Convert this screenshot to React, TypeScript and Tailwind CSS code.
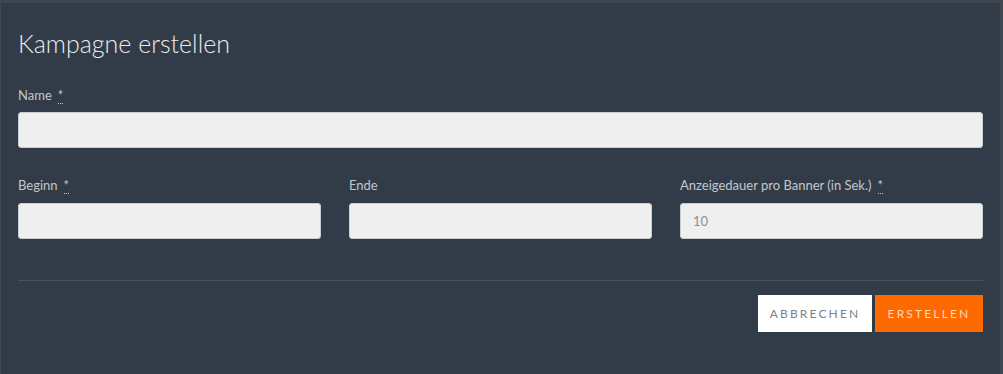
const fieldClass =
  'h-9 w-full rounded-[3px] border border-[#c9cdd2] bg-[#efefef] px-3 text-[13px] text-[#8a8f94] outline-none';

function Label({ text, required, gap = 'mb-[9px]' }: { text: string; required?: boolean; gap?: string }) {
  return (
    <label className={`${gap} block text-[13px] leading-4 text-[#c3c7cc]`}>
      {text}
      {required && (
        <span className="ml-[6px] border-b border-dotted border-[#c3c7cc] leading-none">*</span>
      )}
    </label>
  );
}

export default function App() {
  return (
    <div className="h-[374px] w-[1003px] border-t-[3px] border-r-[3px] border-l border-[#3f464f] bg-[#323c48] font-['Lato',sans-serif]">
      <div className="px-[17px] pt-[24px]">
        <h1 className="text-[25px] font-light leading-8 text-[#e9ebed]">Kampagne erstellen</h1>

        <div className="mt-[28px]">
          <Label text="Name" required />
          <input className={fieldClass} />
        </div>

        <div className="mt-[29px] grid grid-cols-3 gap-[28px]">
          <div>
            <Label text="Beginn" required gap="mb-[10px]" />
            <input className={fieldClass} />
          </div>
          <div>
            <Label text="Ende" gap="mb-[10px]" />
            <input className={fieldClass} />
          </div>
          <div>
            <Label text="Anzeigedauer pro Banner (in Sek.)" required gap="mb-[10px]" />
            <input className={fieldClass} defaultValue="10" />
          </div>
        </div>

        <div className="mt-[41px] border-t border-[#48525d]" />

        <div className="mt-[14px] flex justify-end gap-[3px]">
          <button className="h-[37px] w-[114px] bg-white text-[12px] tracking-[0.18em] text-[#7d8288]">
            ABBRECHEN
          </button>
          <button className="h-[37px] w-[108px] bg-[#ff6a00] text-[12px] tracking-[0.18em] text-[#ffd8bd]">
            ERSTELLEN
          </button>
        </div>
      </div>
    </div>
  );
}
